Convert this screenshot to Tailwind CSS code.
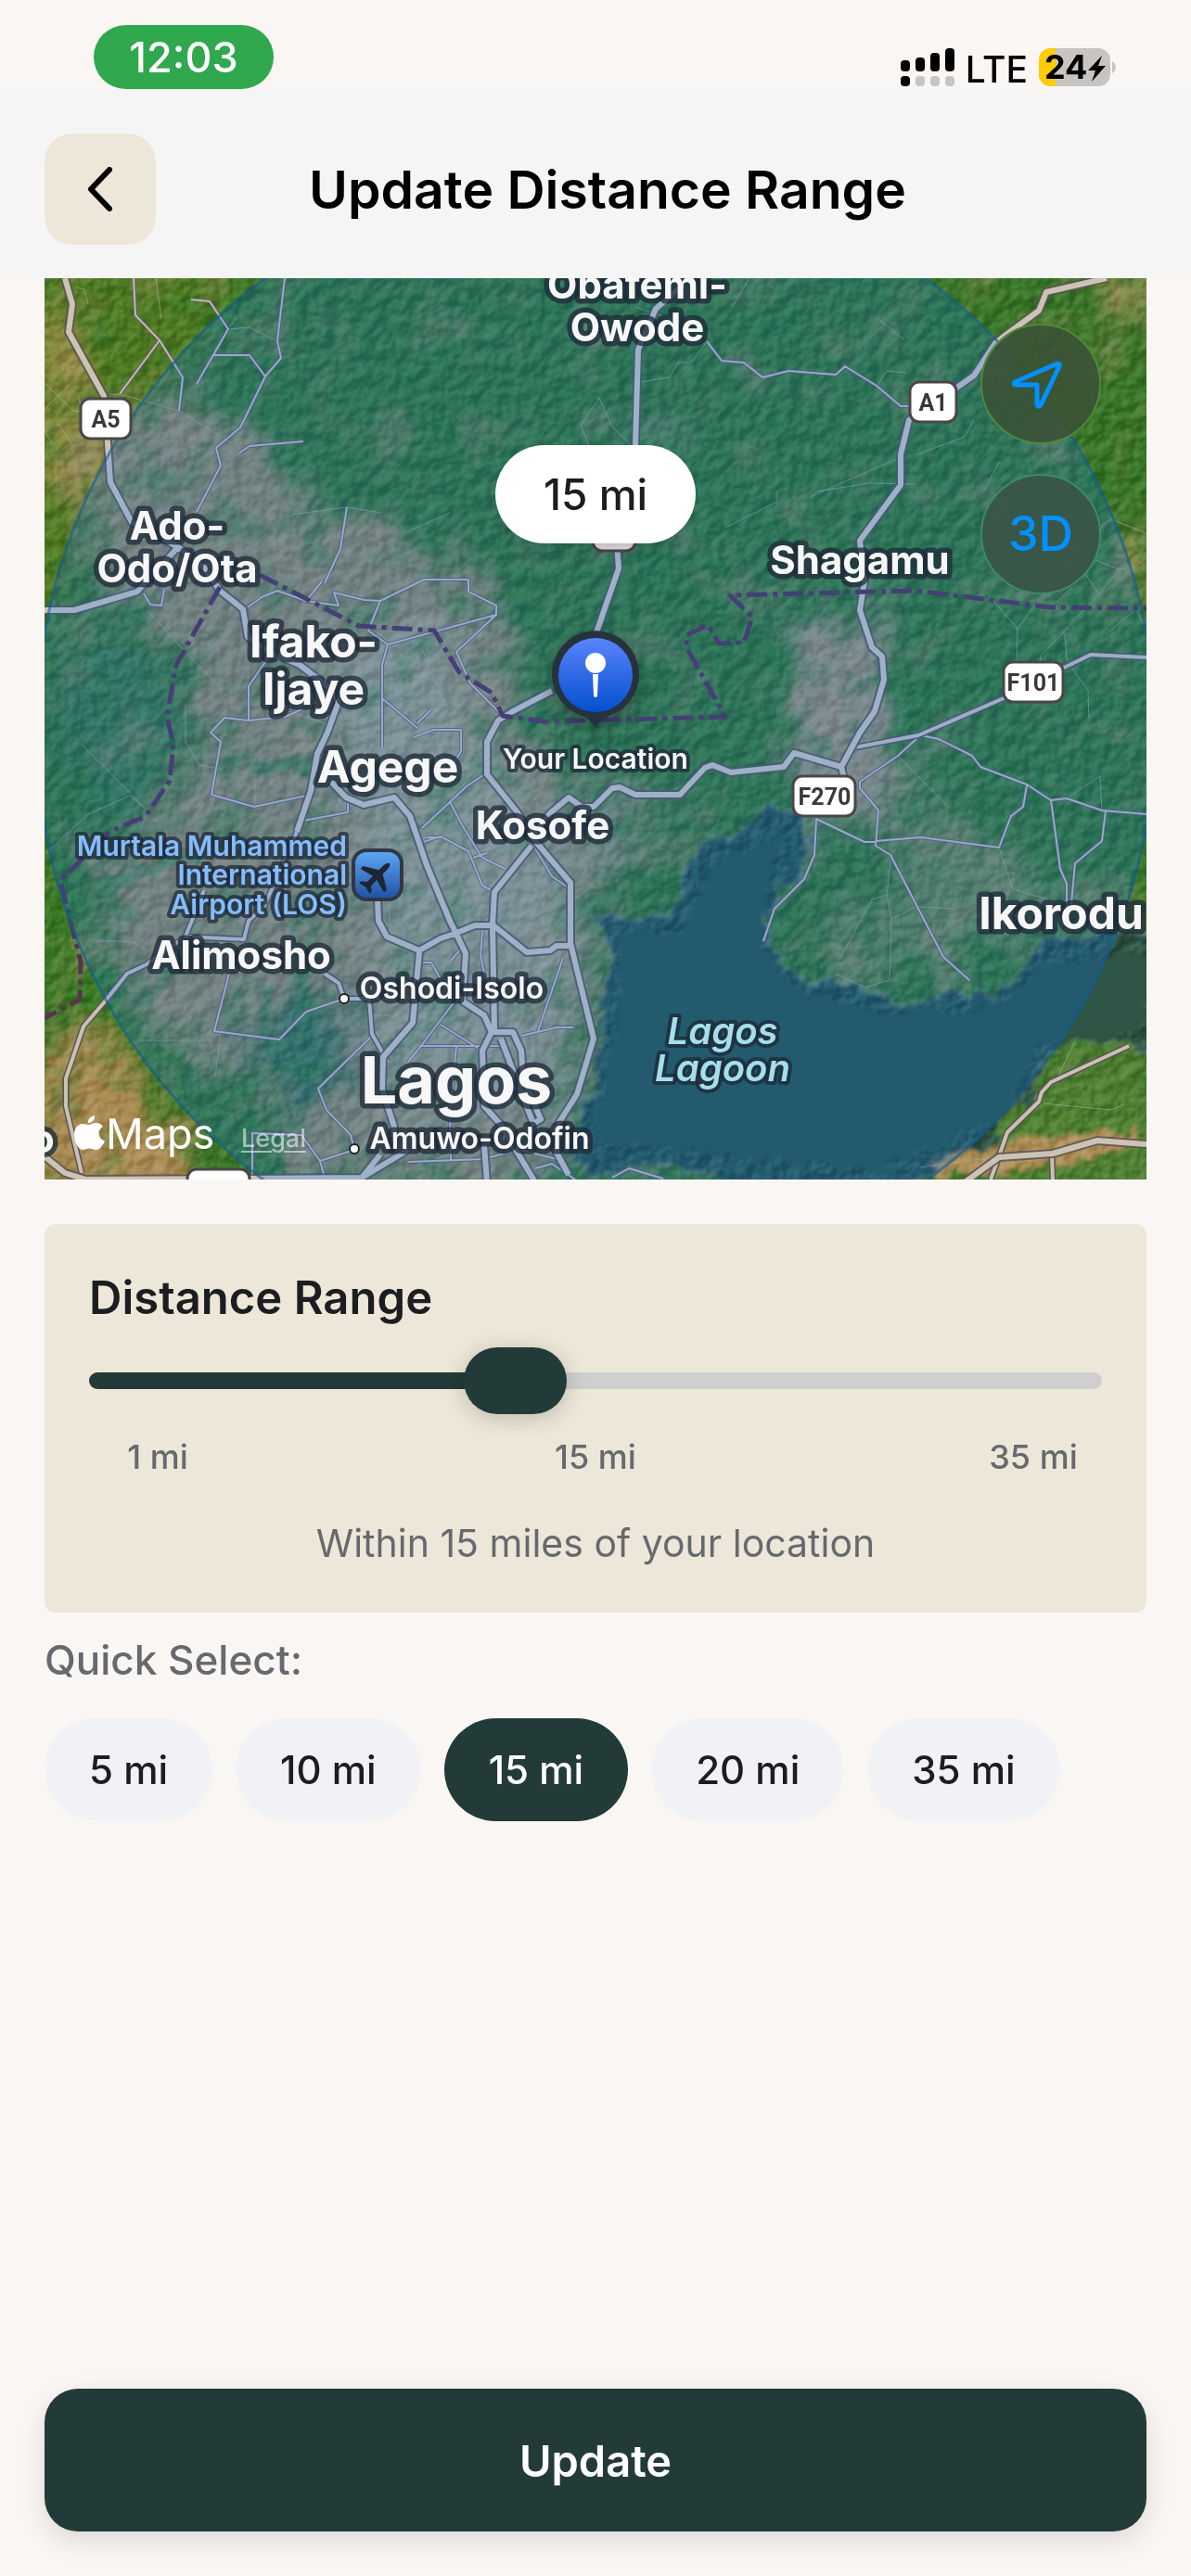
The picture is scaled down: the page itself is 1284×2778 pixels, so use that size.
<!DOCTYPE html>
<html lang="en">

<head>
    <meta charset="UTF-8">
    <meta name="viewport" content="width=device-width, initial-scale=1.0">
    <title>Update Distance Range</title>
    <script src="https://cdn.jsdelivr.net/npm/@tailwindcss/browser@4"></script>
</head>

<body class="flex min-h-screen flex-col bg-[#faf6f3] font-['Inter','Liberation_Sans',sans-serif] text-[#1c1d21]">

    <!-- Status bar -->
    <div class="flex h-24 items-start justify-between pl-[101px] pr-20 pt-[27px]">
        <div class="flex h-[69px] w-[194px] items-center justify-center rounded-full bg-[#30a84e] text-[45px] leading-none font-medium text-white">12:03</div>
        <div class="mt-6 flex items-center gap-3 text-black">
            <svg class="h-[42px] w-[58px]" viewBox="0 0 58 42">
                <g fill="#000">
                    <rect x="0" y="13" width="10" height="12" rx="4" />
                    <rect x="16" y="10" width="10" height="15" rx="4" />
                    <rect x="32" y="5" width="10" height="20" rx="4" />
                    <rect x="48" y="0" width="10" height="25" rx="4" />
                    <rect x="0" y="30" width="10" height="11" rx="4" />
                </g>
                <g fill="#c8c4c1">
                    <rect x="16" y="30" width="10" height="11" rx="4" />
                    <rect x="32" y="30" width="10" height="11" rx="4" />
                    <rect x="48" y="30" width="10" height="11" rx="4" />
                </g>
            </svg>
            <span class="pt-1 text-[39px] leading-none font-medium">LTE</span>
            <svg class="h-[42px] w-[84px]" viewBox="0 0 84 42">
                <defs>
                    <clipPath id="battery"><rect width="77" height="41" rx="13" /></clipPath>
                </defs>
                <g clip-path="url(#battery)">
                    <rect width="77" height="41" fill="#c8c4c1" />
                    <rect width="18" height="41" fill="#fc0" />
                </g>
                <path d="M79 14c5 3 5 10 0 13z" fill="#c8c4c1" />
                <text x="6" y="33" font-size="36" font-weight="700">24</text>
                <path d="M68 8 53 24h8l-4 12 15-17h-8z" />
            </svg>
        </div>
    </div>

    <!-- Header -->
    <header class="flex h-[204px] items-center bg-[#f5f5f5] px-12 pt-3">
        <button aria-label="Back" class="flex size-[120px] items-center justify-center rounded-[30px] bg-[#ede7d9]">
            <svg class="h-12 w-7" viewBox="0 0 28 48" fill="none" stroke="#000" stroke-width="6" stroke-linecap="round" stroke-linejoin="round">
                <path d="M24 3 4 24l20 21" />
            </svg>
        </button>
        <h1 class="flex-1 pr-[94px] text-center text-[57px] leading-none font-semibold text-black">Update Distance Range</h1>
    </header>

    <!-- Map -->
    <section class="relative mx-12 aspect-[1188/972] overflow-hidden bg-[#3f7529]">
        <svg class="absolute inset-0 size-full" viewBox="48 300 1188 972" preserveAspectRatio="xMidYMid slice">
            <defs>
                <filter id="soft" x="-30%" y="-30%" width="160%" height="160%">
                    <feGaussianBlur stdDeviation="18" result="b" />
                    <feTurbulence type="fractalNoise" baseFrequency=".02" numOctaves="4" seed="4" />
                    <feDisplacementMap in="b" scale="90" xChannelSelector="R" yChannelSelector="G" />
                </filter>
                <filter id="shore" x="-5%" y="-5%" width="110%" height="110%">
                    <feTurbulence type="fractalNoise" baseFrequency=".04" numOctaves="4" seed="8" result="n" />
                    <feDisplacementMap in="SourceGraphic" in2="n" scale="26" xChannelSelector="R" yChannelSelector="G" />
                    <feGaussianBlur stdDeviation="2" />
                </filter>
                <filter id="relief" x="0" y="0" width="100%" height="100%" color-interpolation-filters="sRGB">
                    <feTurbulence type="fractalNoise" baseFrequency=".07" numOctaves="3" seed="11" />
                    <feColorMatrix values="0 0 0 0 0  0 0 0 0 0  0 0 0 0 0  1 0 0 0 0" />
                    <feDiffuseLighting surfaceScale="6" lighting-color="#fff">
                        <feDistantLight azimuth="225" elevation="32" />
                    </feDiffuseLighting>
                    <feGaussianBlur stdDeviation="1" />
                </filter>
                <filter id="patches" x="0" y="0" width="100%" height="100%" color-interpolation-filters="sRGB">
                    <feTurbulence type="fractalNoise" baseFrequency=".018" numOctaves="5" seed="23" />
                    <feColorMatrix values="0 0 0 0 .7  0 0 0 0 .58  0 0 0 0 .42  3.4 0 0 0 -1.75" />
                </filter>
                <filter id="woods" x="0" y="0" width="100%" height="100%" color-interpolation-filters="sRGB">
                    <feTurbulence type="fractalNoise" baseFrequency=".022" numOctaves="5" seed="40" />
                    <feColorMatrix values="0 0 0 0 .2  0 0 0 0 .47  0 0 0 0 .16  0 3.6 0 0 -1.8" />
                </filter>
                <linearGradient id="pin" x1="0" y1="0" x2="0" y2="1">
                    <stop offset="0" stop-color="#5b84fc" />
                    <stop offset="1" stop-color="#0350d0" />
                </linearGradient>
                <linearGradient id="airport" x1="0" y1="0" x2="0" y2="1">
                    <stop offset="0" stop-color="#5fa8f5" />
                    <stop offset="1" stop-color="#1f50a4" />
                </linearGradient>
                <filter id="glow" x="-50%" y="-50%" width="200%" height="200%">
                    <feDropShadow dx="0" dy="6" stdDeviation="10" flood-opacity=".35" />
                </filter>

                <!-- road network, each class is stroked twice: casing, then fill -->
                <path id="streets" d="M144 300 146 340 172 367 197 407 193 443M172 367 129 425M206 323 226 325 246 355 212 414M307 300 299 368 303 386 286 406 259 461 233 483 238 502 212 552M229 383H269L286 406M257 489 269 481 327 476M374 547 367 592 350 629M267 655 282 644 299 637 330 648 365 653 360 639 393 647 410 648 457 625H505V638L535 653V663L492 703 507 737 540 770M330 648 347 627M410 648 397 680 418 695 535 663M418 695 412 717V753L412 805M412 753 450 785M155 640 162 652 174 653 177 635M290 708 268 740V777L308 773 325 765M268 777 242 774 227 790 238 800 228 857 274 870 335 857M327 885 375 876V865M762 368 778 389 802 391 822 407 850 400 901 404 911 395 945 416 971 438H980M993 793 1012 797 1048 815 1057 827 1107 846 1133 863 1150 861 1188 874 1236 878M990 795 968 815 927 843V850L947 874 944 912 960 922 1017 1032 1045 1057M1107 847 1103 870 1090 880 1077 914 993 903 932 908 880 883 878 922 867 948 835 980 823 1015M1133 863 1143 937 1150 953V975M1192 874 1188 907 1159 931 1155 975M247 1050 231 1112 301 1121 330 1091 371 1077M401 1117 343 1174 352 1197 378 1224 382 1240 345 1252 350 1270M345 1252 325 1224 272 1222V1270M455 893 503 848 525 833M460 903 475 903M450 780 465 765M446 795 467 787H497V810L480 840M485 865 500 893 520 925 545 937M510 925 525 920M450 910 475 902 505 918 520 955 533 962M577 915 595 945 612 957M453 1038 465 1038 480 1065M520 1005 518 1030 525 1065M500 1020 485 1037M607 1033 580 1112M562 1117 600 1108H618M475 1105 515 1130M490 1080 450 1133 440 1145M452 1128 520 1128H540M492 1128 485 1200 486 1252M440 1253 520 1250 560 1240 600 1250M577 1260 595 1255 620 1272M660 1270 678 1260 715 1271" />
                <path id="roads" d="M1236 709 1176 706 1147 720 1082 753 990 793 922 806M193 1015 158 1040 137 1050 113 1080 90 1107 71 1163V1193L88 1265M1217 1128 1133 1167 1123 1178 1120 1188 1086 1221 1077 1247M320 897 285 977 268 993 263 1013 200 1010 220 960M350 1050 365 1060 371 1077H398L401 1115 418 1145M1077 1247 1068 1272M1134 1245 1135 1272" />
                <path id="highways" d="M70 300 78 328 74 358 112 427 116 477 119 520 142 563 192 590 220 612 237 637 262 657 267 687 290 703 323 717 357 743 365 757 353 790 342 813 335 853 320 897M192 590 148 638 80 658H48M357 843 373 860 392 868 425 860 442 880 460 933 485 993 502 1028 499 1080 522 1095 530 1113 520 1133 522 1193 540 1213 577 1275M407 970 408 993 417 1010 452 1025 475 1012 490 1007 512 998H532L568 1027 593 1025 600 1020H615M452 1027 445 1103 413 1140 412 1175 425 1215 424 1240M531 997 533 1110M573 912 533 962 531 997M530 1113H553L562 1133 564 1163 583 1207 575 1212 540 1120M522 1235 525 1275M595 745 553 767 537 777 525 800V835L557 875 577 907 615 952V1017L640 1120 622 1180 603 1210 600 1243 613 1267M573 903 593 877 613 860 627 870H640L660 850 668 849 685 857H733L760 828 768 825 788 833 845 827 856 812 907 827 927 790 943 767 953 733 951 708 940 698 927 658 932 627 927 583 971 523V490L980 453 1033 417 1050 405 1073 370 1090 357 1120 335 1128 315 1193 300M907 827 910 840M737 307 707 333 688 377 685 480 665 587 667 613 643 682M1236 1234 1183 1230 1135 1244 1077 1248 1040 1275M48 1247 70 1265 93 1272 390 1270 410 1245M390 1270 440 1240" />
            </defs>

            <!-- land cover -->
            <rect x="48" y="300" width="1188" height="972" fill="#3b7629" />
            <g filter="url(#soft)">
                <path d="M20 270H290L200 420 90 600 20 760z" fill="#4f7a24" />
                <path d="M40 340h50v180H40z" fill="#8d8a3c" />
                <path d="M90 460 230 430 330 540 480 590 540 660 570 780 620 860 640 980 640 1150 600 1280 330 1280 280 1180 130 1080 100 930 220 830 200 700 110 640z" fill="#94895f" />
                <path d="M340 680 480 670 530 820 600 900 620 1000 600 1200 420 1200 400 960z" fill="#9f9b79" />
                <path d="M60 700h120l10 130-90 70z" fill="#3f773a" />
                <path d="M850 690 960 650 960 780 950 900 890 870 860 830z" fill="#a0906f" />
                <path d="M950 800 1050 900 1140 940 1180 990 1080 1020 950 1060 880 1020 980 960z" fill="#6c8546" />
                <path d="M1180 290h70v40h-60zM1200 590h40v60h-40z" fill="#a09356" />
                <path d="M670 470 710 440 720 500 690 530z" fill="#6d8552" />
                <path d="M620 860 740 850 700 890 640 960z" fill="#8a8a63" />
                <path d="M40 1110 120 1120 200 1240 230 1290 30 1290z" fill="#a98a51" />
                <path d="M60 940 170 1110 260 1240 200 1210 100 1110 50 1080z" fill="#377a20" />
                <path d="M250 1090 400 1080 380 1170 290 1190z" fill="#42714a" />
            </g>
            <path d="M100 960c60-30 110-30 150-60M140 1080c30-10 60-40 60-70M285 1060c0 60 20 90 35 60s-5-110 0-130M230 830c60-15 90 0 140 0" fill="none" stroke="#417a3d" stroke-width="14" opacity=".6" filter="url(#shore)" />
            <rect x="48" y="300" width="1188" height="972" filter="url(#patches)" opacity=".35" />
            <rect x="48" y="300" width="1188" height="972" filter="url(#woods)" opacity=".45" />

            <!-- Lagos lagoon -->
            <g filter="url(#shore)">
                <path d="M830 865 803 890 752 915 735 955 725 990 685 992 640 985 655 1015 655 1050 648 1080 650 1120 632 1190 620 1220 616 1250 640 1268 700 1256 750 1260 800 1285 970 1285 1030 1252 1070 1238 1112 1195 1126 1160 1120 1145 1145 1125 1190 1120 1260 1140 1260 1005 1200 1000 1130 1015 1105 1035 1095 1065 1060 1075 1030 1068 985 1085 945 1072 905 1058 870 1060 842 1035 828 1010 828 990 842 965 866 940 874 900 860 880z" fill="#2e5445" stroke="#8a9482" stroke-width="3" stroke-opacity=".5" />
                <path d="M1065 1272 1080 1200 1130 1180 1140 1130 1230 1130 1250 1280z" fill="#4f8030" />
                <path d="M1000 1250 1110 1225 1236 1220 1180 1250 1100 1262 1020 1268z" fill="#ad8f58" />
            </g>
            <rect x="48" y="300" width="1188" height="972" filter="url(#relief)" class="mix-blend-soft-light" opacity=".38" />
            <path d="M845 900 770 930 750 975 735 1005 665 1005 670 1090 640 1230 780 1245 950 1260 1090 1200 1110 1130 1236 1110V1030L1120 1040 1090 1085 950 1095 860 1070 820 1020 825 970z" fill="#2e5445" filter="url(#shore)" />

            <!-- roads -->
            <g fill="none" stroke-linejoin="round">
                <g stroke="#b5aca8" stroke-width="1" opacity=".6">
                    <path d="M48 413 79 443 87 444M48 441 78 412M84 425 89 445M63 457 78 480M48 464 57 480M168 300 174 344M82 310 91 312 95 328M118 425 133 426 193 443 250 478M246 355 269 353 299 368M246 355 255 342M314 555 374 547 411 553M440 573 485 553M784 568 838 541V529M690 412 722 407 731 391 745 391 762 368M790 330 808 300M684 331 740 349M646 429 626 459 635 480M646 429 660 460 680 480M945 416 956 400 977 402M946 343 974 366M986 491 1040 471 1050 452M971 493 875 535M875 537 880 530 938 521 986 522M1061 529 1077 498M1236 575 1198 560 1187 568M1181 604 1206 614 1185 641 1122 707 1121 715M1206 614 1222 612M1171 620 1185 641M1139 650 1156 633M1066 642 1097 678 1125 640M1097 678 1096 720M1148 683 1150 712 1173 745 1174 775M1192 684 1225 657 1232 672M968 815 1022 870M1077 914 1092 959 1130 970M960 930 956 965 961 991 959 1057 933 1065 900 1050M961 991 988 978 1030 980M956 965 940 970 905 1035M1150 861 1186 837 1188 874M1140 1162 1159 1123M1125 1190 1197 1197 1212 1191M992 1259 1077 1247" />
                    <path d="M87 802 157 872M50 920 95 878 140 858 157 872M100 1015H140L160 1025M150 1122H230M238 1115 232 1160M160 660 197 700 240 745M260 700 300 670 260 730M200 760V800L215 825 240 830M290 760 380 790 440 830M275 870V840M300 980 330 995M420 900V1020M360 780 380 830M455 700 480 760 455 780M250 678 225 700M530 1130H500M420 1095H400M500 1240 470 1250" />
                </g>
                <use href="#streets" stroke="#65596a" stroke-width="4" stroke-opacity=".8" />
                <use href="#streets" stroke="#c4bbb2" stroke-width="2" />
                <use href="#roads" stroke="#5d5350" stroke-width="7" />
                <use href="#roads" stroke="#c9c1b4" stroke-width="4" />
                <use href="#highways" stroke="#5d5350" stroke-width="10" stroke-opacity=".85" />
                <use href="#highways" stroke="#cbc4b6" stroke-width="6" />
                <!-- state border -->
                <path d="M280 620 387 675 468 680 495 725 530 747 542 772 587 778 782 773 740 698V685L763 674 775 694 802 693 811 665 787 642 987 637 1133 655 1236 656M237 633 190 717 180 773 187 803 183 842 157 880 118 897 65 950 87 1037 86 1078 48 1098" stroke="#593350" stroke-width="5" stroke-dasharray="22 6 5 6" />
            </g>

            <!-- search radius -->
            <circle cx="642" cy="787" r="603" fill="#006eff" fill-opacity=".22" stroke="#135c94" stroke-opacity=".6" stroke-width="3" />

            <!-- road shields -->
            <g fill="#fff" stroke="#4a4646" stroke-width="3">
                <rect x="87" y="430" width="54" height="43" rx="10" />
                <rect x="981" y="412" width="50" height="43" rx="10" />
                <rect x="1082" y="714" width="64" height="43" rx="10" />
                <rect x="855" y="837" width="67" height="43" rx="10" />
                <rect x="639" y="550" width="46" height="44" rx="10" fill="#ddd" />
                <rect x="202" y="1261" width="67" height="43" rx="10" />
            </g>
            <g font-family="Roboto, 'Liberation Sans', sans-serif" font-size="25" font-weight="700" fill="#3a3838" text-anchor="middle">
                <text x="114" y="461">A5</text>
                <text x="1006" y="443">A1</text>
                <text x="1114" y="745">F101</text>
                <text x="889" y="868">F270</text>
            </g>

            <!-- place names -->
            <g fill="#f7f7f7" stroke="#1e2a38" stroke-opacity=".75" stroke-width="11" stroke-linejoin="round" paint-order="stroke" font-weight="700" text-anchor="middle">
                <g font-size="42">
                    <text x="687" y="322">Obafemi-</text>
                    <text x="687" y="368">Owode</text>
                    <text x="191" y="582">Ado-</text>
                    <text x="191" y="628">Odo/Ota</text>
                    <text x="927" y="619">Shagamu</text>
                    <text x="585" y="905">Kosofe</text>
                    <text x="260" y="1045">Alimosho</text>
                    <text x="46" y="1243">o</text>
                </g>
                <g font-size="48">
                    <text x="338" y="709">Ifako-</text>
                    <text x="338" y="760">Ijaye</text>
                    <text x="418" y="844">Agege</text>
                    <text x="1144" y="1002">Ikorodu</text>
                </g>
                <text x="492" y="1190" font-size="70">Lagos</text>
                <g font-size="32" font-weight="600">
                    <text x="487" y="1077">Oshodi-Isolo</text>
                    <text x="517" y="1239">Amuwo-Odofin</text>
                </g>
                <text x="642" y="829" font-size="30" font-weight="600" stroke-width="8">Your Location</text>
                <g font-size="30" font-weight="600" fill="#86bcff" stroke-width="8" text-anchor="end">
                    <text x="374" y="923">Murtala Muhammed</text>
                    <text x="374" y="954">International</text>
                    <text x="374" y="986">Airport (LOS)</text>
                </g>
                <g font-size="40" font-weight="600" font-style="italic" fill="#a6dfe9" stroke-width="8">
                    <text x="779" y="1126">Lagos</text>
                    <text x="779" y="1166">Lagoon</text>
                </g>
            </g>
            <g fill="#fff" stroke="#222" stroke-width="2">
                <circle cx="371" cy="1077" r="5" />
                <circle cx="382" cy="1239" r="5" />
            </g>

            <!-- airport badge -->
            <rect x="381" y="917" width="52" height="53" rx="14" fill="url(#airport)" stroke="#323745" stroke-width="4" />
            <path transform="translate(407 944) rotate(45)" d="M0-18c2.500 0 3 4 3 8v5l15 9v4L3 4v9l5 4v3l-8-2-8 2v-3l5-4V4l-15 4V4l15-9v-5c0-4 .5-8 3-8z" fill="#1d2536" />

            <!-- location pin -->
            <g filter="url(#glow)">
                <path d="M642 785c-5-8-9-11-17-14a47 47 0 1 1 34 0c-8 3-12 6-17 14z" fill="#25333c" />
            </g>
            <circle cx="642" cy="728" r="40" fill="url(#pin)" />
            <circle cx="642" cy="715" r="11" fill="#fff" />
            <path d="M639 727h6l-1 23a2 2 0 0 1-4 0z" fill="#fff" />

            <!-- Apple Maps mark -->
            <g fill="#fff">
                <path transform="translate(80 1203)" d="M15 10c2.500 0 5-2 9-2 3 0 5.500 1.500 7 4-7 4-5.500 13 2 15.500C31 32 27.500 37 23.500 37c-3 0-4.500-1.500-7.500-1.500S11.500 37 9 37C4.500 37 0 28 0 21 0 13 4.500 9 9 9c2.500 0 4.500 1 6 1zM22 0c.5 4-2.500 8-7 8-.5-4 3-7.500 7-8z" />
                <text x="114" y="1239" font-size="45">Maps</text>
            </g>
        </svg>
        <a href="#legal" class="absolute bottom-[31px] left-[212px] text-[27px] leading-none font-medium text-white/55 underline decoration-2 underline-offset-4">Legal</a>

        <div class="absolute left-1/2 top-[180px] flex h-[106px] w-[216px] -translate-x-1/2 items-center justify-center rounded-full bg-white text-[46px] leading-none font-medium shadow-lg">15 mi</div>

        <div class="absolute right-[49px] top-[49px] flex flex-col gap-8">
            <button aria-label="Current location" class="flex size-[130px] items-center justify-center rounded-full border-2 border-[#4e8a3a] bg-[#3b5236]/90">
                <svg class="size-16 pr-2" viewBox="0 0 56 56" fill="none" stroke="#0091ff" stroke-width="5" stroke-linejoin="round">
                    <path d="M50 6 4 26q-2 3 1 3h23v21q1 4 4 1L52 9q1-3-2-3z" />
                </svg>
            </button>
            <button class="flex size-[130px] items-center justify-center rounded-full border-2 border-[#3f8a68] bg-[#3a5548]/95 text-[52px] leading-none font-medium text-[#0091ff]">3D</button>
        </div>
    </section>

    <!-- Distance range -->
    <section class="mx-12 mt-12 flex flex-col rounded-xl bg-[#ede7d9] px-12 pb-12 pt-12">
        <label for="distance" class="text-[49px] leading-[64px] font-semibold">Distance Range</label>
        <input id="distance" type="range" min="1" max="35" value="15"
            class="mt-[21px] h-[72px] w-full appearance-none bg-transparent [&::-webkit-slider-runnable-track]:h-[18px] [&::-webkit-slider-runnable-track]:rounded-full [&::-webkit-slider-runnable-track]:bg-[linear-gradient(to_right,#233b38_43%,#cfcfcf_43%)] [&::-webkit-slider-thumb]:-mt-[27px] [&::-webkit-slider-thumb]:h-[72px] [&::-webkit-slider-thumb]:w-[111px] [&::-webkit-slider-thumb]:appearance-none [&::-webkit-slider-thumb]:rounded-[36px] [&::-webkit-slider-thumb]:bg-[#233b38] [&::-webkit-slider-thumb]:shadow-[0_4px_24px_rgba(0,0,0,0.2)]">
        <div class="mt-6 flex justify-between text-center text-[36px] leading-[44px] font-medium text-[#66696d]">
            <span class="w-[148px]">1 mi</span>
            <span class="w-[148px]">15 mi</span>
            <span class="w-[148px]">35 mi</span>
        </div>
        <p class="mt-11 text-center text-[41px] leading-[54px] text-[#66696d]">Within 15 miles of your location</p>
    </section>

    <!-- Quick select -->
    <section class="mx-12 mt-6">
        <h2 class="text-[44px] leading-[54px] font-medium text-[#66696d]">Quick Select:</h2>
        <div class="mt-9 flex flex-wrap gap-[25px] text-[42px] leading-none font-medium">
            <button class="h-[111px] rounded-full bg-[#f0f2f6] px-12">5 mi</button>
            <button class="h-[111px] rounded-full bg-[#f0f2f6] px-12">10 mi</button>
            <button class="h-[111px] rounded-full bg-[#233b38] px-12 text-white">15 mi</button>
            <button class="h-[111px] rounded-full bg-[#f0f2f6] px-12">20 mi</button>
            <button class="h-[111px] rounded-full bg-[#f0f2f6] px-12">35 mi</button>
        </div>
    </section>

    <button class="mx-12 mb-12 mt-auto h-[154px] rounded-[36px] bg-[#233b38] text-[47px] leading-none font-semibold text-white shadow-[0_10px_30px_rgba(0,0,0,0.12)]">Update</button>
</body>

</html>
